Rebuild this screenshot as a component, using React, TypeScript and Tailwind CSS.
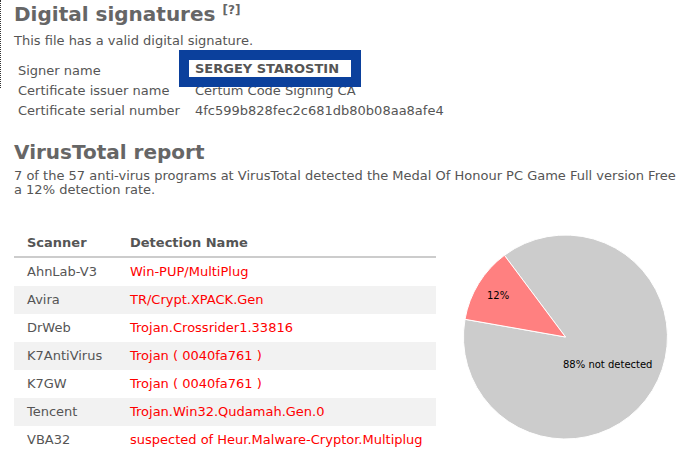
const rows = [
  { scanner: "AhnLab-V3", name: "Win-PUP/MultiPlug" },
  { scanner: "Avira", name: "TR/Crypt.XPACK.Gen" },
  { scanner: "DrWeb", name: "Trojan.Crossrider1.33816" },
  { scanner: "K7AntiVirus", name: "Trojan ( 0040fa761 )" },
  { scanner: "K7GW", name: "Trojan ( 0040fa761 )" },
  { scanner: "Tencent", name: "Trojan.Win32.Qudamah.Gen.0" },
  { scanner: "VBA32", name: "suspected of Heur.Malware-Cryptor.Multiplug" },
];

const sig = [
  { label: "Signer name", value: "" },
  { label: "Certificate issuer name", value: "Certum Code Signing CA" },
  { label: "Certificate serial number", value: "4fc599b828fec2c681db80b08aa8afe4" },
];

function Pie() {
  // centre and radius in svg coords, red slice 190deg..233.2deg (12%)
  return (
    <svg width="245" height="234" viewBox="0 0 245 234">
      <path
        d="M125.5 116 L64.4 34.3 A102 102 0 1 1 25 98.3 Z"
        fill="#cccccc"
        stroke="#ffffff"
        strokeWidth="1"
      />
      <path
        d="M125.5 116 L25 98.3 A102 102 0 0 1 64.4 34.3 Z"
        fill="#ff8080"
        stroke="#ffffff"
        strokeWidth="1"
      />
      <text x="47" y="78" fontSize="10" fill="#000" fontFamily="DejaVu Sans, sans-serif">
        12%
      </text>
      <text x="123" y="147" fontSize="10" fill="#000" fontFamily="DejaVu Sans, sans-serif">
        88% not detected
      </text>
    </svg>
  );
}

export default function App() {
  return (
    <div className="relative w-[685px] h-[454px] overflow-hidden bg-white text-[#555] font-['DejaVu_Sans',Verdana,sans-serif]">
      <div className="absolute left-0 top-0 h-[88px] border-l border-dotted border-[#333]"></div>

      <div className="pl-[14px] pt-[2px]">
        <h1 className="flex items-start text-[20px] leading-[25px] font-bold text-[#666]">
          <span>Digital signatures</span>
          <span className="ml-[7px] text-[12px] leading-[14px] mt-[1px]">[?]</span>
        </h1>
        <p className="text-[13px] leading-[15px] mt-[6px]">This file has a valid digital signature.</p>

        <div className="mt-[13px] pl-[4px] text-[13px]">
          {sig.map((s) => (
            <div key={s.label} className="flex h-[20px] items-center">
              <div className="w-[177px]">{s.label}</div>
              <div>{s.value}</div>
            </div>
          ))}
        </div>

        <h2 className="mt-[19px] text-[20px] leading-[25px] font-bold text-[#666]">VirusTotal report</h2>
        <p className="text-[13px] leading-[14px] mt-[4px] whitespace-nowrap">
          7 of the 57 anti-virus programs at VirusTotal detected the Medal Of Honour PC Game Full version Free
          <br />
          a 12% detection rate.
        </p>

        <div className="flex mt-[33px]">
          <div className="w-[422px] text-[13px]">
            <div className="flex h-[28px] items-center border-b-2 border-[#ccc] font-bold text-[#555]">
              <div className="w-[116px] pl-[13px]">Scanner</div>
              <div>Detection Name</div>
            </div>
            {rows.map((r, i) => (
              <div
                key={r.scanner}
                className={"flex h-[28px] items-center " + (i % 2 === 1 ? "bg-[#f2f2f2]" : "bg-white")}
              >
                <div className="w-[116px] pl-[13px]">{r.scanner}</div>
                <div className="text-[#ff0000]">{r.name}</div>
              </div>
            ))}
          </div>
          <div className="ml-[4px] -mt-[9px]">
            <Pie />
          </div>
        </div>
      </div>

      <div className="absolute left-[179px] top-[50px] w-[182px] h-[37px] border-[10px] border-[#0b409c] bg-white flex items-center pl-[6px] text-[13px] font-bold text-[#555]">
        SERGEY STAROSTIN
      </div>
    </div>
  );
}
